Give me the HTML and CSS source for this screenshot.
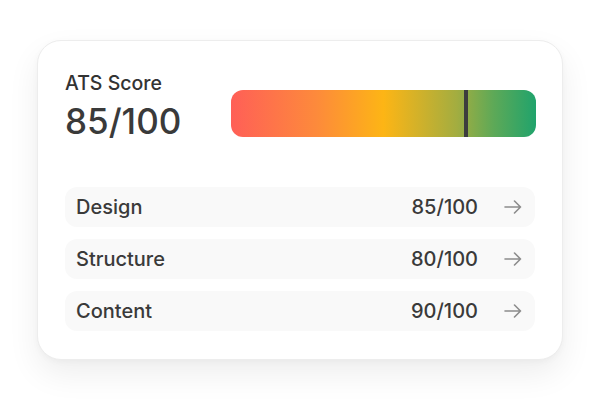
FILE: index.html
```html
<!DOCTYPE html>
<html>
<head>
<meta charset="utf-8">
<link rel="stylesheet" href="styles.css">
</head>
<body>
<div class="stage">
  <div class="card">
    <div class="header">
      <div class="summary">
        <div class="label">ATS Score</div>
        <div class="score">85/100</div>
      </div>
      <div class="meter">
        <div class="marker" style="left: 76.5%"></div>
      </div>
    </div>
    <div class="rows">
      <div class="row">
        <span class="row-name">Design</span>
        <span class="row-score">85/100</span>
        <svg class="arrow" width="18" height="14" viewBox="0 0 18 14"><path d="M1 7H16.5M10.5 1L16.5 7L10.5 13" fill="none" stroke="#8c8c8c" stroke-width="1.6" stroke-linecap="round" stroke-linejoin="round"/></svg>
      </div>
      <div class="row">
        <span class="row-name">Structure</span>
        <span class="row-score">80/100</span>
        <svg class="arrow" width="18" height="14" viewBox="0 0 18 14"><path d="M1 7H16.5M10.5 1L16.5 7L10.5 13" fill="none" stroke="#8c8c8c" stroke-width="1.6" stroke-linecap="round" stroke-linejoin="round"/></svg>
      </div>
      <div class="row">
        <span class="row-name">Content</span>
        <span class="row-score">90/100</span>
        <svg class="arrow" width="18" height="14" viewBox="0 0 18 14"><path d="M1 7H16.5M10.5 1L16.5 7L10.5 13" fill="none" stroke="#8c8c8c" stroke-width="1.6" stroke-linecap="round" stroke-linejoin="round"/></svg>
      </div>
    </div>
  </div>
</div>
</body>
</html>
```
FILE: styles.css
```css
html, body {
  margin: 0;
  padding: 0;
  background: #ffffff;
}
body {
  font-family: Inter, "Noto Sans", sans-serif;
  color: #333333;
  width: 600px;
  height: 400px;
  overflow: hidden;
}
.stage {
  padding: 40px 37px 0 37px;
}
.card {
  box-sizing: border-box;
  width: 526px;
  background: #ffffff;
  border: 1px solid #ededed;
  border-radius: 24px;
  box-shadow: 0 14px 32px rgba(0, 0, 0, 0.07), 0 2px 6px rgba(0, 0, 0, 0.03);
  padding: 30px 27px 28px 27px;
}
.header {
  display: flex;
  justify-content: space-between;
  align-items: flex-start;
}
.summary {
  display: flex;
  flex-direction: column;
  gap: 6px;
}
.label {
  font-size: 19.5px;
  line-height: 24px;
  font-weight: 500;
  color: #333333;
}
.score {
  font-size: 35px;
  line-height: 40px;
  font-weight: 500;
  color: #3a3a3a;
}
.meter {
  position: relative;
  width: 305px;
  height: 47px;
  margin-top: 19px;
  margin-right: -1px;
  border-radius: 12px;
  background: linear-gradient(90deg, #ff5f57 0%, #fd8a3b 28%, #fdb515 50%, #a3ad40 74%, #5ea957 86%, #20a36c 100%);
}
.marker {
  position: absolute;
  top: 0;
  bottom: 0;
  width: 4px;
  background: #3d3d3d;
}
.rows {
  margin-top: 46px;
  display: flex;
  flex-direction: column;
  gap: 12px;
}
.row {
  display: flex;
  align-items: center;
  height: 40px;
  padding: 0 13px 0 11px;
  background: #f9f9f9;
  border-radius: 12px;
}
.row-name {
  flex: 1;
  font-size: 20px;
  font-weight: 500;
  color: #3a3a3a;
}
.row-score {
  font-size: 20px;
  font-weight: 500;
  color: #3a3a3a;
  margin-right: 26px;
}
.arrow {
  display: block;
}
```
